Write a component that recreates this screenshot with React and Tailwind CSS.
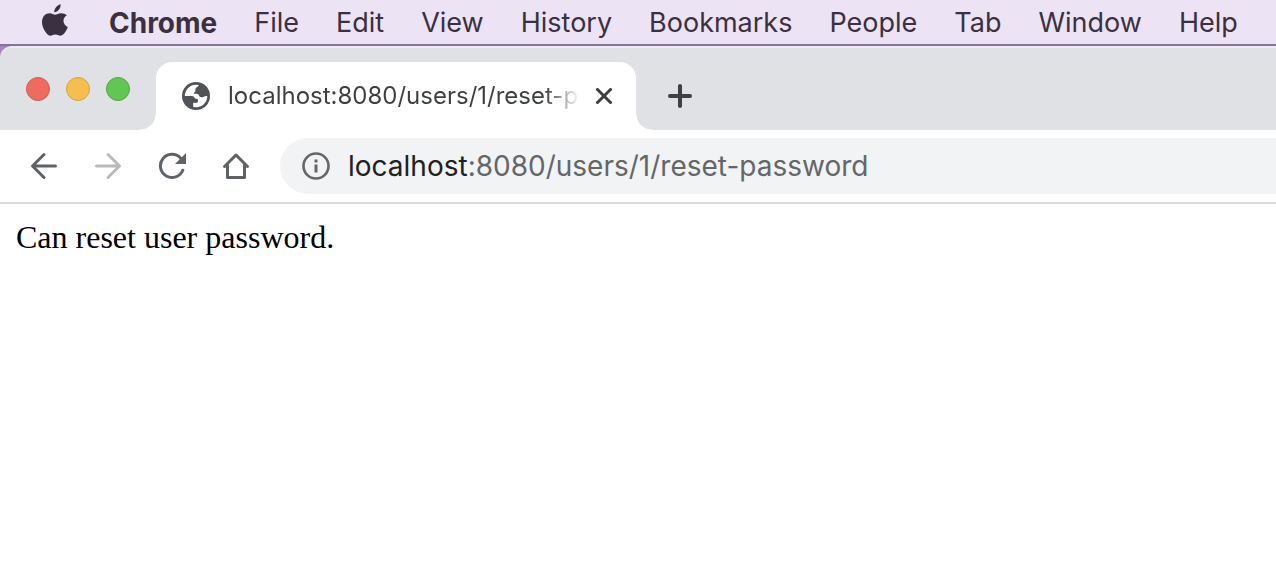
const menus = ["File", "Edit", "View", "History", "Bookmarks", "People", "Tab", "Window", "Help"];

function AppleLogo() {
  return (
    <svg viewBox="0 0 26 32" className="h-8 w-[26px]" fill="currentColor" aria-hidden="true">
      <path d="M18.6.2c.3 2.200-.6 4.100-1.800 5.600-1.200 1.500-3 2.500-4.500 2.400-.2-2 .7-3.900 1.900-5.300C15.400 1.500 17.200.5 18.600.2Z" />
      <path d="M24.900 11.200c-2.600 1.600-3.500 3.700-3.400 5.800.1 2.700 1.700 4.900 4.300 5.900-.6 1.900-1.500 3.600-2.600 5.200-1.400 2.100-2.700 3.600-4.800 3.600-1.900 0-2.700-1.200-5-1.200s-3.100 1.200-5 1.200c-2 0-3.500-1.800-4.800-3.700C1.400 25.300 0 21.700 0 18.300c0-5.800 3.700-9 7.500-9 2.300 0 4.100 1.500 5.600 1.500 1.400 0 3.500-1.600 6.100-1.600 2.200 0 4.300.8 5.700 2Z" />
    </svg>
  );
}

function Globe() {
  return (
    <svg viewBox="0 0 28 28" className="size-7 shrink-0" aria-hidden="true">
      <circle cx="14" cy="14" r="14" fill="#505357" />
      <path fill="#fff" d="M2.800 14A11.300 11.300 0 0 1 16.500 3C16.700 5 13.600 5 13.400 7V9C13.200 10.200 11.800 10.400 11.800 11.800H14.500C17.500 11.800 16.500 15.300 19.500 15.300C22 15.300 22 13.600 25.300 14A11.300 11.300 0 0 1 11.200 25V20.800H14.200C15.500 20.800 16 20 16 18.500C16 17 15 16.800 13 16.500C12 14.800 11.500 14 9.500 14Z" />
    </svg>
  );
}

export default function App() {
  return (
    <div className="min-h-screen bg-white font-['Inter',sans-serif]">
      <nav className="flex h-[46px] items-center gap-[37px] overflow-hidden border-b-2 border-[#86729c] bg-[#ece3f4] pl-[42px] text-[27px] text-[#3a3042]">
        <button aria-label="Apple menu" className="mr-1 -mt-1"><AppleLogo /></button>
        <button className="pt-0.5 text-[28px] font-bold">Chrome</button>
        {menus.map((m) => <button key={m} className="pt-0.5">{m}</button>)}
      </nav>
      <div className="bg-[#a288bd]">
        <header className="flex h-[84px] items-end overflow-hidden rounded-tl-xl border-t-2 border-[#ebecef] bg-[#dfe1e5]">
          <div className="flex h-full w-[156px] shrink-0 items-center gap-4 pl-[26px]">
            <button aria-label="Close window" className="size-6 rounded-full border border-[#d35b51] bg-[#ed6b5f]" />
            <button aria-label="Minimize window" className="size-6 rounded-full border border-[#d6a243] bg-[#f5bf4f]" />
            <button aria-label="Zoom window" className="size-6 rounded-full border border-[#50a73d] bg-[#62c655]" />
          </div>
          <div className="relative flex h-[68px] w-[480px] shrink-0 items-center rounded-t-2xl bg-white pl-[26px] before:absolute before:bottom-0 before:-left-4 before:size-4 before:bg-[radial-gradient(circle_at_top_left,transparent_15px,white_16px)] after:absolute after:-right-4 after:bottom-0 after:size-4 after:bg-[radial-gradient(circle_at_top_right,transparent_15px,white_16px)]">
            <Globe />
            <span className="ml-[18px] w-[352px] overflow-hidden bg-linear-to-r from-[#3c4043] from-90% to-transparent bg-clip-text text-2xl whitespace-nowrap text-transparent">
              localhost:8080/users/1/reset-password
            </span>
            <button aria-label="Close tab" className="ml-3 p-1 text-[#3c4043]">
              <svg viewBox="0 0 16 16" className="size-4" stroke="currentColor" strokeWidth="3" strokeLinecap="round">
                <path d="m1.500 1.500 13 13M14.500 1.500l-13 13" />
              </svg>
            </button>
          </div>
          <div className="flex h-[68px] flex-1 items-center pl-8">
            <button aria-label="New tab" className="text-[#3c4043]">
              <svg viewBox="0 0 24 24" className="size-6" stroke="currentColor" strokeWidth="4" strokeLinecap="round">
                <path d="M12 2v20M2 12h20" />
              </svg>
            </button>
          </div>
        </header>
      </div>
      <div className="flex h-[74px] items-center border-b-2 border-[#dadce0] bg-white pl-[30px] text-[#5f6368]">
        <div className="flex w-[250px] shrink-0 gap-9">
          <button aria-label="Back">
            <svg viewBox="0 0 28 28" className="size-7" fill="none" stroke="currentColor" strokeWidth="3" strokeLinecap="round" strokeLinejoin="round">
              <path d="M25.500 14H3M14 2.500 2.500 14 14 25.500" />
            </svg>
          </button>
          <button aria-label="Forward" className="text-[#bababc]">
            <svg viewBox="0 0 28 28" className="size-7" fill="none" stroke="currentColor" strokeWidth="3" strokeLinecap="round" strokeLinejoin="round">
              <path d="M2.500 14H25M14 2.500 25.500 14 14 25.500" />
            </svg>
          </button>
          <button aria-label="Reload">
            <svg viewBox="0 0 28 28" className="size-7" fill="none">
              <path d="M22.500 6A11.600 11.600 0 1 0 24.800 18.200" stroke="currentColor" strokeWidth="3" strokeLinecap="round" />
              <path d="M28 1v11H17Z" fill="currentColor" />
            </svg>
          </button>
          <button aria-label="Home">
            <svg viewBox="0 0 28 28" className="size-7" fill="none" stroke="currentColor" strokeWidth="3" strokeLinecap="round" strokeLinejoin="round">
              <path d="M2.500 14.500 14 3l11.500 11.500M5.500 13v12.500h17V13" />
            </svg>
          </button>
        </div>
        <div className="flex h-14 flex-1 items-center rounded-l-full bg-[#f1f3f4] pl-[22px] text-[#646668]">
          <button aria-label="View site information">
            <svg viewBox="0 0 28 28" className="size-7" aria-hidden="true">
              <circle cx="14" cy="14" r="12.500" fill="none" stroke="currentColor" strokeWidth="2.600" />
              <path d="M12.500 7.500h3v3h-3zM12.500 12.500h3v8h-3z" fill="currentColor" />
            </svg>
          </button>
          <div role="textbox" aria-label="Address" contentEditable suppressContentEditableWarning className="ml-[18px] flex-1 text-[28px] outline-none">
            <span className="text-[#202124]">localhost</span>:8080/users/1/reset-password
          </div>
        </div>
      </div>
      <main className="px-4 pt-[15px] font-['Liberation_Serif',serif] text-[32px] leading-9 text-black">
        Can reset user password.
      </main>
    </div>
  );
}
